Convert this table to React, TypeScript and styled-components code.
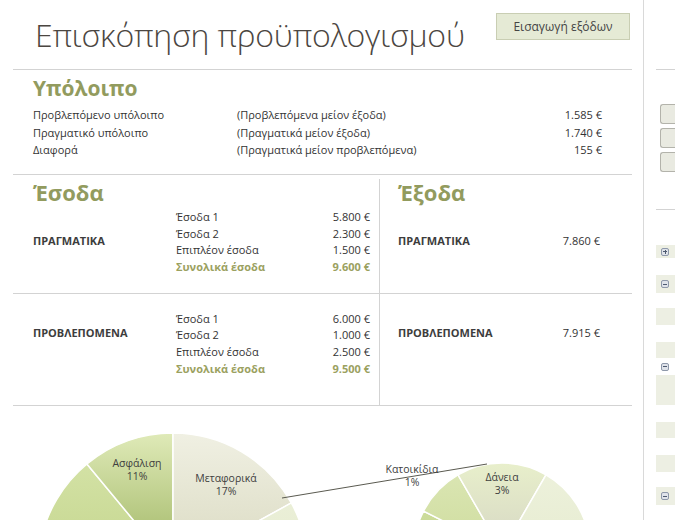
import React from "react";
import styled, { createGlobalStyle } from "styled-components";

const Global = createGlobalStyle`
  * { box-sizing: border-box; }
  html, body { margin: 0; padding: 0; background: #fff; }
  body { font-family: "Open Sans", "Noto Sans", sans-serif; color: #333; }
`;

const Page = styled.div`
  display: flex;
  width: 675px;
  height: 520px;
  overflow: hidden;
  background: #fff;
`;

const Main = styled.main`
  width: 644px;
  flex: none;
  padding: 0 11px 0 13px;
  border-right: 1px solid #d9d9d9;
  display: flex;
  flex-direction: column;
`;

const Header = styled.header`
  height: 70px;
  flex: none;
  border-bottom: 1px solid #d3d3d3;
  display: flex;
  justify-content: space-between;
  align-items: flex-start;
`;

const Title = styled.h1`
  margin: 15px 0 0 22px;
  font-family: "Open Sans", sans-serif;
  font-weight: 300;
  font-size: 32px;
  letter-spacing: -0.2px;
  line-height: 40px;
  color: #4b4641;
  white-space: nowrap;
`;

const ActionButton = styled.button`
  margin: 13px 2px 0 0;
  width: 134px;
  height: 27px;
  border: 1px solid #c9ceb3;
  background: #e5ead5;
  font-family: "Open Sans", sans-serif;
  font-size: 12px;
  color: #444;
  padding: 0;
  cursor: pointer;
`;

const Balance = styled.section`
  height: 105px;
  flex: none;
  border-bottom: 1px solid #d3d3d3;
  padding: 6px 30px 0 20px;
`;

const SectionTitle = styled.h2<{ $size?: number }>`
  margin: 0;
  font-family: "Open Sans", sans-serif;
  font-weight: 700;
  font-size: ${(p) => p.$size ?? 22}px;
  line-height: ${(p) => (p.$size ?? 22) + 4}px;
  color: #929b5e;
`;

const BalanceTable = styled.div`
  margin-top: 5px;
  display: grid;
  grid-template-columns: 204px 1fr auto;
  font-size: 11px;
  line-height: 17.5px;
  color: #333;
`;

const Value = styled.span`
  text-align: right;
  white-space: nowrap;
`;

const Row = styled.div<{ $h: number; $pad: number }>`
  height: ${(p) => p.$h}px;
  flex: none;
  border-bottom: 1px solid #d3d3d3;
  display: grid;
  grid-template-columns: 367px 1fr;
  padding-top: ${(p) => p.$pad}px;
`;

const LeftCell = styled.div`
  border-right: 1px solid #d3d3d3;
  padding-left: 20px;
`;

const RightCell = styled.div`
  padding-left: 18px;
`;

const Group = styled.div<{ $gap: number }>`
  margin-top: ${(p) => p.$gap}px;
  display: grid;
  grid-template-columns: 143px 194px;
  align-items: start;
`;

const ExpenseGroup = styled.div<{ $gap: number }>`
  margin-top: ${(p) => p.$gap}px;
  width: 202px;
  display: grid;
  grid-template-columns: 1fr auto;
  font-size: 11px;
  line-height: 16.7px;
`;

const GroupLabel = styled.div<{ $offset?: number }>`
  margin-top: ${(p) => p.$offset ?? 0}px;
  font-size: 11px;
  line-height: 16.7px;
  font-weight: 700;
  color: #3d3d3d;
  white-space: nowrap;
`;

const Lines = styled.div`
  display: grid;
  grid-template-columns: 1fr auto;
  font-size: 11px;
  line-height: 16.7px;
  color: #333;
`;

const Line = styled.span<{ $total?: boolean; $right?: boolean }>`
  white-space: nowrap;
  font-weight: ${(p) => (p.$total ? 700 : 400)};
  color: ${(p) => (p.$total ? "#9ba15f" : "#333")};
  text-align: ${(p) => (p.$right ? "right" : "left")};
`;

const Charts = styled.div`
  flex: 1;
  overflow: hidden;
`;

const Strip = styled.aside`
  flex: 1;
  padding-left: 12px;
  display: flex;
  flex-direction: column;
`;

const StripRule = styled.div<{ $top: number }>`
  margin-top: ${(p) => p.$top}px;
  border-top: 1px solid #d3d3d3;
  height: 0;
`;

const StripButtons = styled.div`
  margin: 34px 0 0 4px;
  display: flex;
  flex-direction: column;
  gap: 4px;
`;

const StripButton = styled.div`
  height: 20px;
  border: 1px solid #b3b3ab;
  border-right: none;
  border-radius: 3px 0 0 3px;
  background: #e9eae1;
`;

const StripBlock = styled.div<{ $top: number; $h: number; $fill?: boolean }>`
  margin-top: ${(p) => p.$top}px;
  height: ${(p) => p.$h}px;
  background: ${(p) => (p.$fill === false ? "transparent" : "#edefe3")};
  display: flex;
  align-items: center;
  padding-left: 5px;
  flex: none;
`;

const Toggle = styled.span<{ $plus?: boolean }>`
  position: relative;
  width: 8px;
  height: 8px;
  border: 1px solid #8e98aa;
  border-radius: 2px;
  background: #dfe3ea;
  &::before {
    content: "";
    position: absolute;
    left: 1px;
    top: 2.5px;
    width: 4px;
    height: 1px;
    background: #4e5a70;
  }
  &::after {
    content: "";
    display: ${(p) => (p.$plus ? "block" : "none")};
    position: absolute;
    left: 2.5px;
    top: 1px;
    width: 1px;
    height: 4px;
    background: #4e5a70;
  }
`;

function pt(cx: number, cy: number, r: number, a: number) {
  const rad = (a * Math.PI) / 180;
  return [cx + r * Math.sin(rad), cy - r * Math.cos(rad)];
}

function slice(cx: number, cy: number, r: number, a0: number, a1: number) {
  const [x0, y0] = pt(cx, cy, r, a0);
  const [x1, y1] = pt(cx, cy, r, a1);
  const large = a1 - a0 > 180 ? 1 : 0;
  return `M${cx} ${cy} L${x0.toFixed(2)} ${y0.toFixed(2)} A${r} ${r} 0 ${large} 1 ${x1.toFixed(2)} ${y1.toFixed(2)} Z`;
}

const leftSlices = [
  { a0: -150, a1: -80, fill: "url(#gA)" },
  { a0: -80, a1: -39.6, fill: "url(#gB)" },
  { a0: -39.6, a1: 0, fill: "url(#gC)" },
  { a0: 0, a1: 61.2, fill: "url(#gD)" },
  { a0: 61.2, a1: 150, fill: "url(#gE)" },
];

const rightSlices = [
  { a0: -150, a1: -63, fill: "url(#gB)" },
  { a0: -63, a1: -30, fill: "url(#gA)" },
  { a0: -30, a1: 30, fill: "url(#gF)" },
  { a0: 30, a1: 150, fill: "url(#gE)" },
];

const labels = [
  { x: 124, y: 61, name: "Ασφάλιση", pct: "11%" },
  { x: 213, y: 76, name: "Μεταφορικά", pct: "17%" },
  { x: 399, y: 67, name: "Κατοικίδια", pct: "1%" },
  { x: 489, y: 75, name: "Δάνεια", pct: "3%" },
];

function PieCharts() {
  return (
    <svg width="619" height="115" viewBox="0 0 619 115" style={{ display: "block" }}>
      <defs>
        <linearGradient id="gA" x1="0" y1="0" x2="0" y2="115" gradientUnits="userSpaceOnUse">
          <stop offset="0" stopColor="#e4edc4" />
          <stop offset="1" stopColor="#d3e0a6" />
        </linearGradient>
        <linearGradient id="gB" x1="0" y1="0" x2="0" y2="115" gradientUnits="userSpaceOnUse">
          <stop offset="0" stopColor="#dbe8b2" />
          <stop offset="1" stopColor="#cbdb98" />
        </linearGradient>
        <linearGradient id="gC" x1="0" y1="27" x2="0" y2="115" gradientUnits="userSpaceOnUse">
          <stop offset="0" stopColor="#dfeab8" />
          <stop offset="1" stopColor="#b3c67e" />
        </linearGradient>
        <linearGradient id="gD" x1="0" y1="27" x2="0" y2="115" gradientUnits="userSpaceOnUse">
          <stop offset="0" stopColor="#f0f0e3" />
          <stop offset="1" stopColor="#e1e1cc" />
        </linearGradient>
        <linearGradient id="gE" x1="0" y1="0" x2="0" y2="115" gradientUnits="userSpaceOnUse">
          <stop offset="0" stopColor="#f2f5e4" />
          <stop offset="1" stopColor="#e9eed5" />
        </linearGradient>
        <linearGradient id="gF" x1="0" y1="57" x2="0" y2="115" gradientUnits="userSpaceOnUse">
          <stop offset="0" stopColor="#e8efcb" />
          <stop offset="1" stopColor="#dcdfc6" />
        </linearGradient>
      </defs>
      <g stroke="#ffffff" strokeWidth="1.5">
        {leftSlices.map((s, i) => (
          <path key={i} d={slice(160, 162, 135, s.a0, s.a1)} fill={s.fill} />
        ))}
        {rightSlices.map((s, i) => (
          <path key={`r${i}`} d={slice(489, 145, 88, s.a0, s.a1)} fill={s.fill} />
        ))}
      </g>
      <line x1="269" y1="92" x2="474" y2="58" stroke="#5a5a50" strokeWidth="1" />
      <g fontFamily="'Open Sans', sans-serif" fontSize="10.5" fill="#404040" textAnchor="middle">
        {labels.map((l) => (
          <React.Fragment key={l.name}>
            <text x={l.x} y={l.y}>{l.name}</text>
            <text x={l.x} y={l.y + 13}>{l.pct}</text>
          </React.Fragment>
        ))}
      </g>
    </svg>
  );
}

type Item = { name: string; value: string; total?: boolean };

function IncomeLines({ items }: { items: Item[] }) {
  return (
    <Lines>
      {items.map((it) => (
        <React.Fragment key={it.name}>
          <Line $total={it.total}>{it.name}</Line>
          <Line $total={it.total} $right>
            {it.value}
          </Line>
        </React.Fragment>
      ))}
    </Lines>
  );
}

const actualIncome: Item[] = [
  { name: "Έσοδα 1", value: "5.800 €" },
  { name: "Έσοδα 2", value: "2.300 €" },
  { name: "Επιπλέον έσοδα", value: "1.500 €" },
  { name: "Συνολικά έσοδα", value: "9.600 €", total: true },
];

const plannedIncome: Item[] = [
  { name: "Έσοδα 1", value: "6.000 €" },
  { name: "Έσοδα 2", value: "1.000 €" },
  { name: "Επιπλέον έσοδα", value: "2.500 €" },
  { name: "Συνολικά έσοδα", value: "9.500 €", total: true },
];

const balanceRows = [
  ["Προβλεπόμενο υπόλοιπο", "(Προβλεπόμενα μείον έξοδα)", "1.585 €"],
  ["Πραγματικό υπόλοιπο", "(Πραγματικά μείον έξοδα)", "1.740 €"],
  ["Διαφορά", "(Πραγματικά μείον προβλεπόμενα)", "155 €"],
];

export default function App() {
  return (
    <Page>
      <Global />
      <Main>
        <Header>
          <Title>Επισκόπηση προϋπολογισμού</Title>
          <ActionButton>Εισαγωγή εξόδων</ActionButton>
        </Header>
        <Balance>
          <SectionTitle $size={21}>Υπόλοιπο</SectionTitle>
          <BalanceTable>
            {balanceRows.map(([a, b, c]) => (
              <React.Fragment key={a}>
                <span>{a}</span>
                <span>{b}</span>
                <Value>{c}</Value>
              </React.Fragment>
            ))}
          </BalanceTable>
        </Balance>
        <Row $h={119} $pad={4}>
          <LeftCell>
            <SectionTitle>Έσοδα</SectionTitle>
            <Group $gap={4}>
              <GroupLabel $offset={24}>ΠΡΑΓΜΑΤΙΚΑ</GroupLabel>
              <IncomeLines items={actualIncome} />
            </Group>
          </LeftCell>
          <RightCell>
            <SectionTitle>Έξοδα</SectionTitle>
            <ExpenseGroup $gap={28}>
              <GroupLabel>ΠΡΑΓΜΑΤΙΚΑ</GroupLabel>
              <Value>7.860 €</Value>
            </ExpenseGroup>
          </RightCell>
        </Row>
        <Row $h={112} $pad={0}>
          <LeftCell>
            <Group $gap={16.6}>
              <GroupLabel $offset={14}>ΠΡΟΒΛΕΠΟΜΕΝΑ</GroupLabel>
              <IncomeLines items={plannedIncome} />
            </Group>
          </LeftCell>
          <RightCell>
            <ExpenseGroup $gap={30.6}>
              <GroupLabel>ΠΡΟΒΛΕΠΟΜΕΝΑ</GroupLabel>
              <Value>7.915 €</Value>
            </ExpenseGroup>
          </RightCell>
        </Row>
        <Charts>
          <PieCharts />
        </Charts>
      </Main>
      <Strip>
        <StripRule $top={69} />
        <StripButtons>
          <StripButton />
          <StripButton />
          <StripButton />
        </StripButtons>
        <StripRule $top={37} />
        <StripBlock $top={35} $h={13}>
          <Toggle $plus />
        </StripBlock>
        <StripBlock $top={17} $h={18}>
          <Toggle />
        </StripBlock>
        <StripBlock $top={15} $h={17} />
        <StripBlock $top={17} $h={16} />
        <StripBlock $top={4} $h={9} $fill={false}>
          <Toggle />
        </StripBlock>
        <StripBlock $top={4} $h={30} />
        <StripBlock $top={17} $h={16} />
        <StripBlock $top={17} $h={17} />
        <StripBlock $top={15} $h={18}>
          <Toggle />
        </StripBlock>
      </Strip>
    </Page>
  );
}
